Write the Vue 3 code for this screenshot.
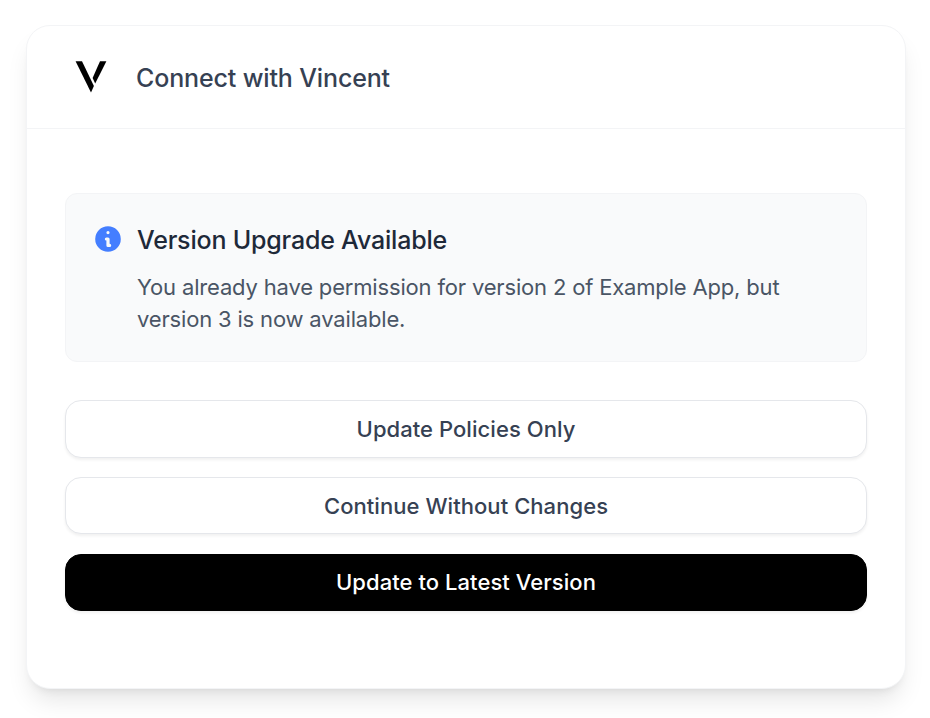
<script setup>
const actions = [
  { label: 'Update Policies Only', kind: 'outline' },
  { label: 'Continue Without Changes', kind: 'outline' },
  { label: 'Update to Latest Version', kind: 'solid' },
]
</script>

<template>
  <main class="page">
    <section class="card">
      <header class="header">
        <svg class="logo" viewBox="0 0 32 32" aria-hidden="true">
          <path d="M0.6 0.3H7L18.9 25L16 31.4Z" />
          <path d="M25 0.3H31.4L20.2 22.6L17.6 17Z" />
        </svg>
        <h1 class="title">Connect with Vincent</h1>
      </header>
      <div class="body">
        <div class="notice">
          <svg class="info" viewBox="0 0 20 20" aria-hidden="true">
            <path fill-rule="evenodd" clip-rule="evenodd" d="M18 10a8 8 0 11-16 0 8 8 0 0116 0zm-7-4a1 1 0 11-2 0 1 1 0 012 0zM9 9a1 1 0 000 2v3a1 1 0 001 1h1a1 1 0 100-2v-3a1 1 0 00-1-1H9z" />
          </svg>
          <div>
            <h2 class="notice-title">Version Upgrade Available</h2>
            <p class="notice-text">You already have permission for version 2 of Example App, but version 3 is now available.</p>
          </div>
        </div>
        <div class="actions">
          <button v-for="a in actions" :key="a.label" :class="['btn', a.kind]">{{ a.label }}</button>
        </div>
      </div>
    </section>
  </main>
</template>

<style>
body { background: #fff; overflow: hidden; }
</style>

<style scoped>
.page { box-sizing: border-box; height: 718px; padding: 25px 25px 29px 26px; font-family: Inter, "Liberation Sans", sans-serif; }
.card { box-sizing: border-box; width: 880px; height: 664px; border: 1px solid #f3f4f6; border-radius: 24px; background: #fff; box-shadow: 0 16px 24px -5px rgba(0,0,0,.1), 0 6px 10px -6px rgba(0,0,0,.1); }
.header { box-sizing: border-box; height: 103px; display: flex; align-items: center; padding-left: 48px; border-bottom: 1px solid #f3f4f6; }
.logo { width: 32px; height: 32px; margin-right: 29px; }
.title { margin: 1px 0 0; font-size: 25px; line-height: 36px; font-weight: 500; letter-spacing: -.14px; color: #364153; }
.body { padding: 64px 38px 0; }
.notice { box-sizing: border-box; height: 169px; display: flex; padding: 28px 26px; border: 1px solid #f3f4f6; border-radius: 12px; background: #f9fafb; }
.info { width: 32px; height: 32px; flex: none; margin: 1px 13px 0 0; fill: #447eff; }
.notice-title { margin: 0; font-size: 25px; line-height: 36px; font-weight: 500; letter-spacing: -.2px; color: #1e2939; }
.notice-text { margin: 13px 0 0; font-size: 22px; line-height: 32px; letter-spacing: -.17px; color: #4a5565; }
.actions { display: grid; gap: 19.3px; margin-top: 38.4px; }
.btn { box-sizing: border-box; height: 57.3px; padding: 0; border: 1px solid #e5e7eb; border-radius: 16px; background: #fff; color: #364153; font: 500 22px/32px Inter, "Liberation Sans", sans-serif; letter-spacing: .06px; box-shadow: 0 2px 3px rgba(0,0,0,.06); }
.solid { background: #000; color: #fff; border-color: #000; }
</style>
